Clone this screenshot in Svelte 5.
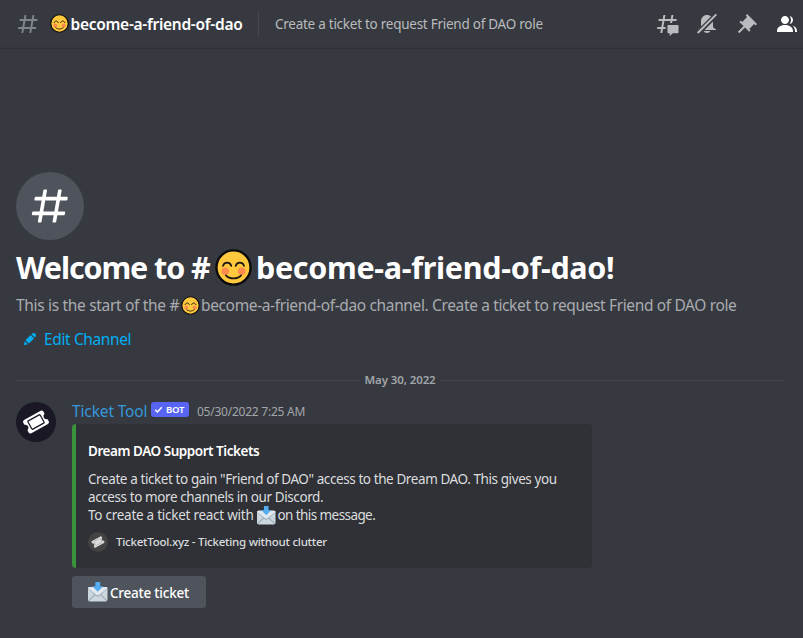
<script>
  const channel = 'become-a-friend-of-dao';
  const topic = 'Create a ticket to request Friend of DAO role';
  const hash =
    'M5.88657 21C5.57547 21 5.3399 20.7189 5.39427 20.4126L6.00001 17H2.59511C2.28449 17 2.04905 16.7198 2.10259 16.4138L2.27759 15.4138C2.31946 15.1746 2.52722 15 2.77011 15H6.35001L7.41001 9H4.00511C3.69449 9 3.45905 8.71977 3.51259 8.41381L3.68759 7.41381C3.72946 7.17456 3.93722 7 4.18011 7H7.76001L8.39677 3.41262C8.43914 3.17391 8.64664 3 8.88907 3H9.87344C10.1845 3 10.4201 3.28107 10.3657 3.58738L9.76001 7H15.76L16.3968 3.41262C16.4391 3.17391 16.6466 3 16.8891 3H17.8734C18.1845 3 18.4201 3.28107 18.3657 3.58738L17.76 7H21.1649C21.4755 7 21.711 7.28023 21.6574 7.58619L21.4824 8.58619C21.4406 8.82544 21.2328 9 20.9899 9H17.41L16.35 15H19.7549C20.0655 15 20.301 15.2802 20.2474 15.5862L20.0724 16.5862C20.0306 16.8254 19.8228 17 19.5799 17H16L15.3632 20.5874C15.3209 20.8261 15.1134 21 14.8709 21H13.8866C13.5755 21 13.3399 20.7189 13.3943 20.4126L14 17H8.00001L7.36325 20.5874C7.32088 20.8261 7.11337 21 6.87094 21H5.88657ZM9.41045 9L8.35045 15H14.3504L15.4104 9H9.41045Z';
</script>

{#snippet smile(size)}
  <svg class="emoji" width={size} height={size} viewBox="0 0 36 36" fill="none">
    <circle cx="18" cy="18" r="16.6" fill="#ffc83d" stroke="#0b0b0c" stroke-width="2.3" />
    <circle cx="10" cy="21.6" r="3.7" fill="#ff8b4f" />
    <circle cx="26" cy="21.6" r="3.7" fill="#ff8b4f" />
    <path d="M7.800 16.400c1-4.300 7-4.300 8 0M20.200 16.400c1-4.300 7-4.300 8 0M10.600 25.600c3.500 4 11.300 4 14.800 0" stroke="#1d1710" stroke-width="1.700" stroke-linecap="round" />
  </svg>
{/snippet}

{#snippet envelope(size)}
  <svg class="emoji" width={size} height={size} viewBox="0 0 36 36">
    <rect y="9" width="36" height="27" rx="3.5" fill="#ccd6dd" />
    <path d="M1 34.8 13.5 22.5M35 34.8 22.5 22.5" stroke="#99aab5" stroke-width="2" />
    <path d="M0 12.5C0 10.500 1.500 9 3.500 9h29c2 0 3.500 1.500 3.500 3.500L21.500 25.500c-2 1.800-5 1.800-7 0z" fill="#99aab5" />
    <path d="M0 11.500C0 10 1.500 9 3.500 9h29c2 0 3.500 1 3.500 2.500L21 23.500c-2 1.500-4 1.500-6 0z" fill="#e1e8ed" />
    <path d="M13.500 0h9v8H28L18 18 8 8h5.500z" fill="#55acee" />
  </svg>
{/snippet}

{#snippet ticket(size, ink, paper, line)}
  <svg width={size} height={size} viewBox="0 0 40 40">
    <circle cx="20" cy="20" r="20" fill={ink} />
    <g transform="rotate(-29 20 20)">
      <path d="M10.500 12.500h19a2 2 0 0 1 2 2v2.300a3.300 3.300 0 0 0 0 6.400v2.300a2 2 0 0 1-2 2h-19a2 2 0 0 1-2-2v-2.300a3.300 3.300 0 0 0 0-6.400v-2.300a2 2 0 0 1 2-2z" fill={paper} />
      <rect x="13" y="15.300" width="14" height="9.400" rx=".8" fill="none" stroke={line} stroke-width="1.300" />
    </g>
  </svg>
{/snippet}

<div class="app">
  <header>
    <svg class="hash" width="24" height="24" viewBox="0 0 24 24"><path d={hash} fill="#80848c" fill-rule="evenodd" /></svg>
    {@render smile(19)}
    <span class="name">{channel}</span>
    <i class="rule"></i>
    <span class="topic">{topic}</span>
    <nav>
      <svg width="24" height="24" viewBox="0 0 24 24" fill="#b9bbbe">
        <path d="M5.43309 21C5.35842 21 5.30189 20.9325 5.31494 20.859L5.99991 17H2.14274C2.06819 17 2.01168 16.9327 2.02453 16.8593L2.33253 15.0993C2.34258 15.0419 2.39244 15 2.45074 15H6.34991L7.40991 9H3.55274C3.47819 9 3.42168 8.93274 3.43453 8.85931L3.74253 7.09931C3.75258 7.04189 3.80244 7 3.86074 7H7.75991L8.45234 3.09903C8.46251 3.04174 8.51231 3 8.57049 3H10.3267C10.4014 3 10.4579 3.06746 10.4449 3.14097L9.75991 7H15.7599L16.4523 3.09903C16.4625 3.04174 16.5123 3 16.5705 3H18.3267C18.4014 3 18.4579 3.06746 18.4449 3.14097L17.7599 7H21.6171C21.6916 7 21.7481 7.06725 21.7353 7.14069L21.4273 8.90069C21.4172 8.95811 21.3674 9 21.3091 9H17.4099L17.0495 11.04H15.05L15.4104 9H9.41035L8.35035 15H10.5599V17H7.99991L7.30749 20.901C7.29732 20.9583 7.24752 21 7.18934 21H5.43309Z" />
        <path d="M13.4399 12.96C12.9097 12.96 12.4799 13.3898 12.4799 13.92V20.2213C12.4799 20.7515 12.9097 21.1813 13.4399 21.1813H14.3999C14.5325 21.1813 14.6399 21.2887 14.6399 21.4213V23.4597C14.6399 23.6677 14.8865 23.7773 15.0408 23.6378L17.4858 21.4289C17.6622 21.2695 17.8916 21.1813 18.1294 21.1813H22.5599C23.0901 21.1813 23.5199 20.7515 23.5199 20.2213V13.92C23.5199 13.3898 23.0901 12.96 22.5599 12.96H13.4399Z" />
      </svg>
      <svg width="24" height="24" viewBox="0 0 24 24" fill="#b9bbbe">
        <mask id="cut"><path d="M0 0h24v24H0z" fill="#fff" /><path d="M1 23 23 1" stroke="#000" stroke-width="5" /></mask>
        <path mask="url(#cut)" d="M18 9V14C18 15.657 19.344 17 21 17V18H3V17C4.656 17 6 15.657 6 14V9C6 5.686 8.686 3 12 3C15.314 3 18 5.686 18 9ZM11.9999 21C10.5239 21 9.24793 20.1945 8.55493 19H15.4449C14.7519 20.1945 13.4759 21 11.9999 21Z" />
        <path d="M2.700 21 21.300 2.400" stroke="#b9bbbe" stroke-width="2" />
      </svg>
      <svg width="24" height="24" viewBox="0 0 24 24" fill="#b9bbbe">
        <path d="M22 12L12.101 2.10101L10.686 3.51401L12.101 4.92901L7.15096 9.87801V9.88001L5.73596 8.46501L4.32196 9.88001L8.56496 14.122L2.90796 19.778L4.32196 21.192L9.97896 15.536L14.222 19.778L15.636 18.364L14.222 16.95L19.171 12H19.172L20.586 13.414L22 12Z" />
      </svg>
      <svg width="24" height="24" viewBox="0 0 24 24" fill="#fff">
        <path d="M14 8.00598C14 10.211 12.206 12.006 10 12.006C7.795 12.006 6 10.211 6 8.00598C6 5.80098 7.794 4.00598 10 4.00598C12.206 4.00598 14 5.80098 14 8.00598ZM2 19.006C2 15.473 5.29 13.006 10 13.006C14.711 13.006 18 15.473 18 19.006V20.006H2V19.006Z" />
        <path d="M20.0001 20.006H22.0001V19.006C22.0001 16.4433 20.2697 14.4415 17.5213 13.5352C19.0621 14.9127 20.0001 16.8059 20.0001 19.006V20.006ZM14.8834 11.9077C16.6657 11.5044 18.0001 9.9077 18.0001 8.00598C18.0001 5.96916 16.4693 4.28218 14.4971 4.0367C15.4322 5.09511 16.0001 6.48524 16.0001 8.00598C16.0001 9.44888 15.4889 10.7742 14.6378 11.8102C14.7203 11.8418 14.8022 11.8743 14.8834 11.9077Z" />
      </svg>
    </nav>
  </header>

  <main>
    <div class="circle"><svg width="44" height="44" viewBox="0 0 24 24"><path d={hash} fill="#fff" fill-rule="evenodd" /></svg></div>
    <h1><span class="lead">Welcome to #</span>{@render smile(37)}<span class="tail">{channel}!</span></h1>
    <p class="intro"><span class="lead">This is the start of the #</span>{@render smile(19)}<span class="tail">{channel} channel. {topic}</span></p>
    <a class="edit" href="#edit">
      <svg width="16" height="16" viewBox="0 0 24 24" fill="#00aff4"><path d="M19.2929 9.8299L19.9409 9.18278C21.353 7.77064 21.353 5.47197 19.9409 4.05892C18.5287 2.64678 16.2292 2.64678 14.817 4.05892L14.1699 4.70694L19.2929 9.8299ZM12.8962 5.97688L5.18469 13.6906L10.3085 18.813L18.0201 11.0992L12.8962 5.97688ZM4.11851 20.9704L8.75906 19.8112L4.18692 15.239L3.02678 19.8796C2.95028 20.1856 3.04028 20.5105 3.26349 20.7337C3.48669 20.9569 3.8116 21.046 4.11851 20.9704Z" /></svg>
      <span>Edit Channel</span>
    </a>
    <div class="divider"><span>May 30, 2022</span></div>

    <article>
      <div class="avatar">{@render ticket(40, '#191824', '#ffffff', '#191824')}</div>
      <div class="body">
        <div class="meta">
          <span class="author">Ticket Tool</span>
          <span class="badge">
            <svg width="9" height="9" viewBox="0 0 9 9"><path d="M1.200 4.800 3.400 7 7.800 2.200" fill="none" stroke="#fff" stroke-width="1.500" /></svg>
            <span>BOT</span>
          </span>
          <time>05/30/2022 7:25 AM</time>
        </div>
        <section class="embed">
          <h2>Dream DAO Support Tickets</h2>
          <div class="line">Create a ticket to gain "Friend of DAO" access to the Dream DAO. This gives you</div>
          <div class="line">access to more channels in our Discord.</div>
          <div class="react"><span class="before">To create a ticket react with</span>{@render envelope(18.5)}<span class="after">on this message.</span></div>
          <footer>{@render ticket(20, '#434343', '#dddddd', '#a8a8a8')}<span>TicketTool.xyz - Ticketing without clutter</span></footer>
        </section>
        <button>{@render envelope(19.5)}<span>Create ticket</span></button>
      </div>
    </article>
  </main>
</div>

<style>
  :global(body) { margin: 0; background: #36393f; }
  .app { width: 803px; height: 638px; overflow: hidden; box-sizing: border-box; background: #36393f; color: #dcddde; font-family: 'Noto Sans', 'Open Sans', sans-serif; white-space: nowrap; }
  svg { display: block; flex: none; }
  .emoji { overflow: visible; }
  header { display: flex; align-items: center; height: 48px; padding: 0 4px 0 16px; box-sizing: border-box; border-bottom: 1px solid #33363b; box-shadow: 0 1px 0 #2e3035; }
  .hash { margin-right: 9.5px; }
  .name { width: 189.5px; padding-left: 2px; box-sizing: border-box; font-size: 15.5px; line-height: 22px; font-weight: 600; letter-spacing: -0.28px; color: #fff; }
  .rule { width: 1px; height: 24px; margin-right: 16px; background: #45484e; }
  .topic { font-size: 13.5px; line-height: 20px; letter-spacing: -0.26px; color: #b9bbbe; padding-top: 1px; }
  nav { display: flex; gap: 16px; margin-left: auto; }
  main { padding: 124px 19px 0 16px; }
  .circle { display: flex; align-items: center; justify-content: center; width: 68px; height: 68px; border-radius: 50%; background: #4f545c; }
  h1 { display: flex; align-items: center; height: 40px; margin: 7px 0 0; font-size: 30.5px; line-height: 40px; font-weight: 700; color: #fff; }
  h1 .lead { width: 199px; letter-spacing: -1.1px; }
  h1 .tail { margin-left: 4px; letter-spacing: -0.31px; }
  .intro { display: flex; align-items: center; margin: 8px 0 0; height: 20px; font-size: 15.5px; line-height: 20px; color: #a9abb0; }
  .intro .lead { width: 165px; letter-spacing: -0.32px; }
  .intro .tail { margin-left: 1px; letter-spacing: -0.365px; }
  .edit { display: flex; align-items: center; gap: 6px; width: fit-content; height: 20px; margin: 14px 0 0 6px; font-size: 15.5px; line-height: 20px; letter-spacing: -0.38px; color: #00aff4; text-decoration: none; }
  .divider { display: flex; align-items: center; gap: 4px; height: 14px; margin-top: 24px; font-size: 11.5px; line-height: 14px; font-weight: 600; letter-spacing: -0.1px; color: #a3a6aa; }
  .divider::before, .divider::after { content: ''; flex: 1; height: 1px; background: #43464c; }
  article { display: flex; gap: 16px; margin-top: 12px; }
  .avatar { margin-top: 3px; }
  .meta { display: flex; height: 25px; }
  .author { width: 79px; font-size: 15.5px; line-height: 22px; letter-spacing: -0.14px; color: #3498db; padding-top: 0.5px; }
  .badge { display: flex; align-items: center; gap: 3px; width: 38px; height: 15px; margin-top: 3px; padding-left: 3px; box-sizing: border-box; border-radius: 3px; background: #5865f2; color: #fff; font-size: 9.5px; line-height: 15px; font-weight: 600; letter-spacing: -0.2px; }
  time { margin-left: 8px; padding-top: 2px; font-size: 12px; line-height: 22px; letter-spacing: -0.24px; color: #a3a6aa; }
  .embed { width: 520px; height: 144px; box-sizing: border-box; padding: 18px 12px 0; border-left: 4px solid #3a923b; border-radius: 4px; background: #2f3136; font-size: 13.5px; line-height: 18px; letter-spacing: -0.41px; color: #dcddde; }
  h2 { margin: 0 0 10px; font-size: 13.5px; line-height: 18px; font-weight: 600; letter-spacing: -0.46px; color: #fff; }
  .react { display: flex; height: 18px; align-items: center; }
  .before { width: 168.5px; letter-spacing: -0.26px; }
  .after { margin-left: 2.5px; letter-spacing: -0.58px; }
  footer { display: flex; align-items: center; gap: 8px; margin-top: 8px; height: 20px; font-size: 11.5px; line-height: 16px; font-weight: 500; letter-spacing: -0.24px; }
  button { display: flex; align-items: center; gap: 3px; width: 134px; height: 32px; margin-top: 8px; padding: 0 0 0 15.5px; border: 0; border-radius: 3px; background: #4f545c; color: #fff; font-family: inherit; font-size: 13.5px; line-height: 18px; font-weight: 500; letter-spacing: -0.22px; }
  button span { padding-top: 1px; }
</style>
